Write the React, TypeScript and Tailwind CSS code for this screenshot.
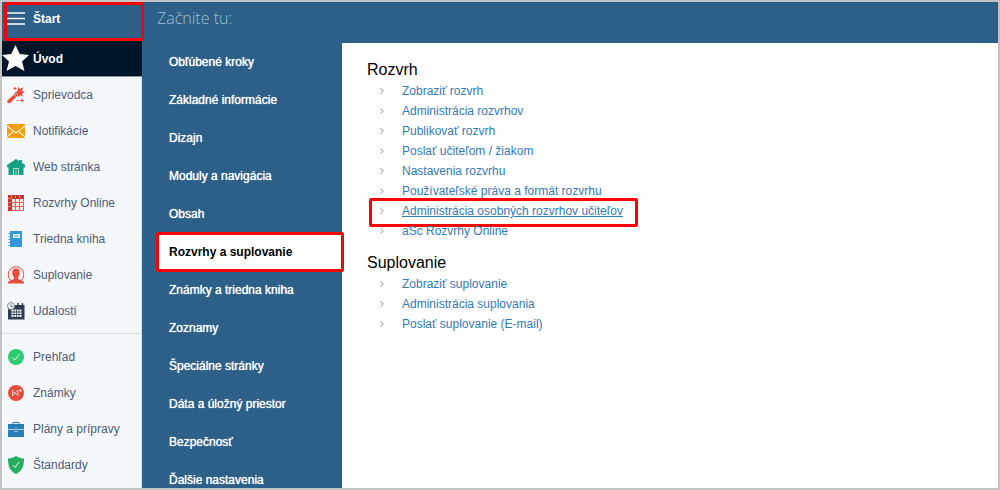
import { ChevronRight } from 'lucide-react';
import type { ReactNode } from 'react';

interface NavItem {
  label: string;
  icon: ReactNode;
}

const mainItems: NavItem[] = [
  {
    label: 'Sprievodca',
    icon: (
      <>
        <path d="M0.5 14.5 8.500 7l2.500 2.500L3 17c-1.800.8-3.500-.8-2.500-2.500z" fill="#e74c3c" />
        <path d="M7 8.500 9.500 11" stroke="#f5f8fa" strokeWidth="0.8" />
        <path d="M11.500.5l1 2.500L16 1.500 15 5l3 1.200-3 1.300 1 3-3-1.200-1.800 1.700-.7-3L7.500 6.500l2.800-1z" fill="#e74c3c" />
        <path d="M6.500 2.500h3M8 1v3M15 12.500v4M13 14.500h4M9.500 14.500h2" stroke="#e74c3c" />
      </>
    ),
  },
  {
    label: 'Notifikácie',
    icon: (
      <>
        <path d="M0 2h18v14H0z" fill="#f39c12" />
        <path d="M0 4l9 7 9-7M0 15l6-5.500M18 15l-6-5.500" fill="none" stroke="#fdebd0" strokeWidth="1.200" />
      </>
    ),
  },
  {
    label: 'Web stránka',
    icon: (
      <>
        <path d="M0 7 9 1l3 2V2h3v3l3 2v2.500h-1.500V17h-15V9.500H0z" fill="#16a085" />
        <path d="M6.500 17v-6.500h5V17M9 12v5" fill="none" stroke="#a9dccf" />
      </>
    ),
  },
  {
    label: 'Rozvrhy Online',
    icon: (
      <>
        <path d="M1 1h16v16H1z" fill="#f9e3e0" />
        <path d="M1 1h16v4H5v12H1z" fill="#c0392b" />
        <path d="M8.500 5v12M12.500 5v12M16.500 5v12M5 8.500h12M5 12.500h12M5 16.500h12" stroke="#d4695f" />
        <path d="M4.500 1v3M8.500 1v3M12.500 1v3M1 4.500h3M1 8.500h3M1 12.500h3" stroke="#dd8c84" />
      </>
    ),
  },
  {
    label: 'Triedna kniha',
    icon: (
      <>
        <path d="M3 1h12v16H3z" fill="#3498db" />
        <path d="M1.500 3.500h2M1.500 6.500h2M1.500 9.500h2M1.500 12.500h2M1.500 15.500h2" stroke="#3498db" />
        <path d="M6 4h7v4H6z" fill="#eaf4fb" />
        <path d="M7.500 6h4" stroke="#3498db" />
      </>
    ),
  },
  {
    label: 'Suplovanie',
    icon: (
      <>
        <circle cx="9" cy="8.500" r="7.800" fill="#fbefee" stroke="#e74c3c" />
        <path d="M9 2.500c2.800 0 3.800 2 3.600 4.500-.1 2-.8 3.500-1.600 4.500v1.500l5 2c.8.500 1 1.500 1 2.500H1c0-1 .2-2 1-2.500l5-2v-1.500c-.8-1-1.500-2.500-1.600-4.500C5.200 4.500 6.200 2.500 9 2.500z" fill="#e74c3c" />
      </>
    ),
  },
  {
    label: 'Udalosti',
    icon: (
      <>
        <path d="M1 3h16.500v14.500H1z" fill="#2c3e50" />
        <path d="M4.500 7.500h10v7.500h-10z" fill="#f5f8fa" />
        <path d="M7 7v8M9.500 7v8M12 7v8M4 10h11M4 12.500h11" stroke="#2c3e50" strokeWidth="0.8" />
        <path d="M11 1v3M15.500 1v3" stroke="#2c3e50" strokeWidth="1.500" />
        <circle cx="4" cy="4" r="3.500" fill="#f5f8fa" stroke="#7d8995" />
        <path d="M4 2v2.500h2" fill="none" stroke="#7d8995" />
      </>
    ),
  },
];

const secondaryItems: NavItem[] = [
  {
    label: 'Prehľad',
    icon: (
      <>
        <circle cx="9" cy="9" r="8" fill="#2ecc71" />
        <path d="M5.500 9.500 8 12l4.500-6" fill="none" stroke="#eafaf1" />
      </>
    ),
  },
  {
    label: 'Známky',
    icon: (
      <>
        <circle cx="9" cy="9" r="8" fill="#e74c3c" />
        <path d="M5.500 6v6L11 6v6M6 8l5 3M12 6.500h3M13.500 5v3" fill="none" stroke="#fbdedb" strokeWidth="0.8" />
      </>
    ),
  },
  {
    label: 'Plány a prípravy',
    icon: (
      <>
        <path d="M1 4h16v13H1z" fill="#2980b9" />
        <path d="M6 4V2.500h6V4" fill="none" stroke="#2980b9" />
        <path d="M1 9.500h6M11 9.500h6" stroke="#a9cce3" />
        <circle cx="9" cy="10" r="1.500" fill="none" stroke="#a9cce3" />
      </>
    ),
  },
  {
    label: 'Štandardy',
    icon: (
      <>
        <path d="M9 0c2.500 1.700 5 2.300 8 2.500 0 7-1.500 12.500-8 15.500C2.500 15 1 9.500 1 2.500 4 2.300 6.500 1.700 9 0z" fill="#27ae60" />
        <path d="M6 9l2.200 2.500L12 6" fill="none" stroke="#eafaf1" />
      </>
    ),
  },
];

const categories = [
  'Obľúbené kroky',
  'Základné informácie',
  'Dizajn',
  'Moduly a navigácia',
  'Obsah',
  'Rozvrhy a suplovanie',
  'Známky a triedna kniha',
  'Zoznamy',
  'Špeciálne stránky',
  'Dáta a úložný priestor',
  'Bezpečnosť',
  'Ďalšie nastavenia',
];

const activeCategory = 'Rozvrhy a suplovanie';
const activeLink = 'Administrácia osobných rozvrhov učiteľov';

const sections = [
  {
    title: 'Rozvrh',
    links: [
      'Zobraziť rozvrh',
      'Administrácia rozvrhov',
      'Publikovať rozvrh',
      'Poslať učiteľom / žiakom',
      'Nastavenia rozvrhu',
      'Používateľské práva a formát rozvrhu',
      'Administrácia osobných rozvrhov učiteľov',
      'aSc Rozvrhy Online',
    ],
  },
  {
    title: 'Suplovanie',
    links: ['Zobraziť suplovanie', 'Administrácia suplovania', 'Poslať suplovanie (E-mail)'],
  },
];

function NavList({ items }: { items: NavItem[] }) {
  return (
    <ul>
      {items.map((item) => (
        <li key={item.label}>
          <a href="#" className="flex h-9 items-center gap-2 pl-[5px] text-[#4f5b78]">
            <svg viewBox="0 0 18 18" className="h-[18px] w-[18px] shrink-0">
              {item.icon}
            </svg>
            {item.label}
          </a>
        </li>
      ))}
    </ul>
  );
}

export default function App() {
  return (
    <div className="flex h-screen flex-col overflow-hidden border-2 border-[#c3c3c3] bg-[#2c6088] font-['Liberation_Sans',Arial,sans-serif] text-xs">
      <div className="flex min-h-0 flex-1">
        <aside className="flex w-[140px] shrink-0 flex-col border-r border-[#dfe4e8] bg-[#f5f8fa]">
          <div className="relative z-10 -mr-px h-[39px] shrink-0 bg-[#2c6088]">
            <button type="button" className="flex h-[34px] w-full items-center gap-2 pl-[5px] font-bold text-white">
              <svg viewBox="0 0 18 14" className="h-[14px] w-[18px]" stroke="#fff" strokeWidth="1.500">
                <path d="M0 1h18M0 6.500h18M0 12h18" />
              </svg>
              Štart
            </button>
            <span className="pointer-events-none absolute inset-y-0 -right-0.5 left-0.5 rounded-xs border-3 border-[#f00]" />
          </div>
          <a
            href="#"
            className="-mr-px flex h-9 shrink-0 items-center gap-1 border-b border-[#8496a5] bg-[#001527] font-bold text-white"
          >
            <svg viewBox="0 0 27 27" className="h-[27px] w-[27px]" fill="#fff">
              <path d="M13.500 0l4.200 9 9.300 1-7 6.500 2.500 9.500-9-5-9 5L7 16.500 0 10l9.300-1z" />
            </svg>
            Úvod
          </a>
          <NavList items={mainItems} />
          <hr className="mt-1 mb-[5px] border-[#d8dcdf]" />
          <NavList items={secondaryItems} />
        </aside>

        <div className="flex min-w-0 flex-1 flex-col">
          <header className="h-[41px] shrink-0 pt-1 pl-[15px] font-['Open_Sans',sans-serif] text-base font-light text-[#a2bdd0]">
            Začnite tu:
          </header>
          <div className="flex min-h-0 flex-1">
            <nav className="w-[200px] shrink-0">
              {categories.map((category) => {
                const isActive = category === activeCategory;

                return (
                  <a
                    key={category}
                    href="#"
                    className={`relative ml-4 flex h-[38px] items-center pl-[11px] ${
                      isActive ? 'bg-white font-bold text-black' : 'text-white [text-shadow:0_0_1px_#fff]'
                    }`}
                  >
                    {category}
                    {isActive && (
                      <span className="pointer-events-none absolute -inset-x-0.5 -inset-y-px rounded-xs border-3 border-[#f00]" />
                    )}
                  </a>
                );
              })}
            </nav>

            <main className="min-w-0 flex-1 bg-white pt-[15px] pl-[25px]">
              {sections.map((section) => (
                <section key={section.title} className="mb-[10px]">
                  <h2 className="h-[23px] text-base text-black">{section.title}</h2>
                  <ul>
                    {section.links.map((link) => (
                      <li key={link} className="flex h-5 items-center pl-[10px] text-[#337ab7]">
                        <ChevronRight className="mr-[15px] h-[10px] w-[10px] shrink-0 text-[#777]" />
                        <span className="relative">
                          <a href="#" className={link === activeLink ? 'underline' : ''}>
                            {link}
                          </a>
                          {link === activeLink && (
                            <span className="pointer-events-none absolute -top-[5px] -right-[15px] -bottom-2 -left-[33px] rounded-xs border-3 border-[#f00]" />
                          )}
                        </span>
                      </li>
                    ))}
                  </ul>
                </section>
              ))}
            </main>
          </div>
        </div>
      </div>
    </div>
  );
}
